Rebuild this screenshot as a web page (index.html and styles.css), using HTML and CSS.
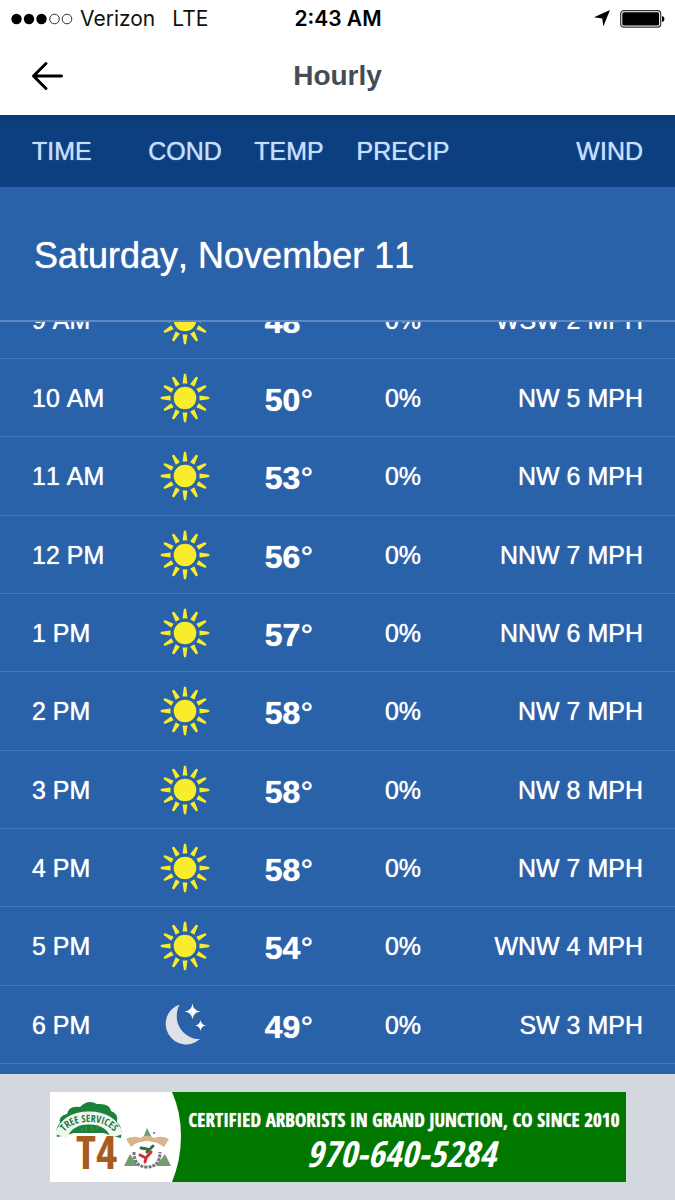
FILE: index.html
```html
<!DOCTYPE html>
<html lang="en">
<head>
<meta charset="utf-8">
<meta name="viewport" content="width=device-width, initial-scale=1">
<title>Hourly</title>
<link rel="stylesheet" href="styles.css">
</head>
<body>
<svg width="0" height="0" class="defs" aria-hidden="true">
  <defs>
    <path id="ray" d="M-2.400 -14.500 L-1.200 -23.500 Q0 -25.500 1.200 -23.500 L2.400 -14.500 Z"/>
    <symbol id="sun" viewBox="-25 -25 50 50">
      <g fill="#f9ec2b">
        <circle r="11.300"/>
        <use href="#ray"/>
        <use href="#ray" transform="rotate(30)"/>
        <use href="#ray" transform="rotate(60)"/>
        <use href="#ray" transform="rotate(90)"/>
        <use href="#ray" transform="rotate(120)"/>
        <use href="#ray" transform="rotate(150)"/>
        <use href="#ray" transform="rotate(180)"/>
        <use href="#ray" transform="rotate(210)"/>
        <use href="#ray" transform="rotate(240)"/>
        <use href="#ray" transform="rotate(270)"/>
        <use href="#ray" transform="rotate(300)"/>
        <use href="#ray" transform="rotate(330)"/>
      </g>
    </symbol>
    <symbol id="moon" viewBox="0 0 50 50">
      <path fill="#dfe1e6" d="M19.500 4.500 A20.500 20.500 0 1 0 40 39 C27 40 10 25 19.500 4.500 Z"/>
      <path fill="#fff" d="M32.500 3.500 Q33.300 10.700 40.500 11.500 Q33.300 12.300 32.500 19.500 Q31.700 12.300 24.500 11.500 Q31.700 10.700 32.500 3.500 Z"/>
      <path fill="#fff" d="M40.500 20 Q41.200 24.800 46 25.500 Q41.200 26.200 40.500 31 Q39.800 26.200 35 25.500 Q39.800 24.800 40.500 20 Z"/>
    </symbol>
  </defs>
</svg>

<div class="app">
  <div class="status">
    <div class="carrier">
      <svg class="signal" width="62" height="12" viewBox="0 0 62 12" role="img" aria-label="Signal 3 of 5">
        <circle cx="5.500" cy="6" r="5.200"/><circle cx="18" cy="6" r="5.200"/><circle cx="30.500" cy="6" r="5.200"/>
        <g fill="none" stroke="#333"><circle cx="43.500" cy="6" r="4.800"/><circle cx="56" cy="6" r="4.800"/></g>
      </svg>
      <span>Verizon</span>
      <span class="network">LTE</span>
    </div>
    <div class="clock">2:43 AM</div>
    <div class="indicators">
      <svg width="16" height="17" viewBox="0 0 16 17" aria-label="Location"><path d="M16 0 L9.300 16.500 L8.300 8.500 L0 7.300 Z"/></svg>
      <svg width="45" height="18" viewBox="0 0 45 18" aria-label="Battery full">
        <rect x=".7" y=".7" width="40" height="16.500" rx="3" fill="#fff" stroke="#333" stroke-width="1.200"/>
        <rect x="2.300" y="2.300" width="36.800" height="13.300" rx="1.500"/>
        <path d="M42 6 Q44.500 6.500 44.500 9 Q44.500 11.500 42 12 Z"/>
      </svg>
    </div>
  </div>

  <header class="nav">
    <button class="back" type="button" aria-label="Back">
      <svg width="34" height="30" viewBox="0 0 34 30" fill="none" stroke="#000" stroke-width="3" stroke-linecap="round" stroke-linejoin="round"><path d="M16 2.500 L3.500 15 L16 27.500 M3.500 15 H31.500"/></svg>
    </button>
    <h1>Hourly</h1>
  </header>

  <table class="hourly">
    <thead>
      <tr><th scope="col">TIME</th><th scope="col">COND</th><th scope="col">TEMP</th><th scope="col">PRECIP</th><th scope="col">WIND</th></tr>
    </thead>
    <tbody class="day">
      <tr><th scope="rowgroup" colspan="5">Saturday, November 11</th></tr>
    </tbody>
    <tbody class="rows">
      <tr><td>9 AM</td><td><svg role="img" aria-label="Sunny"><use href="#sun"/></svg></td><td>48<span>°</span></td><td>0%</td><td>WSW 2 MPH</td></tr>
      <tr><td>10 AM</td><td><svg role="img" aria-label="Sunny"><use href="#sun"/></svg></td><td>50<span>°</span></td><td>0%</td><td>NW 5 MPH</td></tr>
      <tr><td>11 AM</td><td><svg role="img" aria-label="Sunny"><use href="#sun"/></svg></td><td>53<span>°</span></td><td>0%</td><td>NW 6 MPH</td></tr>
      <tr><td>12 PM</td><td><svg role="img" aria-label="Sunny"><use href="#sun"/></svg></td><td>56<span>°</span></td><td>0%</td><td>NNW 7 MPH</td></tr>
      <tr><td>1 PM</td><td><svg role="img" aria-label="Sunny"><use href="#sun"/></svg></td><td>57<span>°</span></td><td>0%</td><td>NNW 6 MPH</td></tr>
      <tr><td>2 PM</td><td><svg role="img" aria-label="Sunny"><use href="#sun"/></svg></td><td>58<span>°</span></td><td>0%</td><td>NW 7 MPH</td></tr>
      <tr><td>3 PM</td><td><svg role="img" aria-label="Sunny"><use href="#sun"/></svg></td><td>58<span>°</span></td><td>0%</td><td>NW 8 MPH</td></tr>
      <tr><td>4 PM</td><td><svg role="img" aria-label="Sunny"><use href="#sun"/></svg></td><td>58<span>°</span></td><td>0%</td><td>NW 7 MPH</td></tr>
      <tr><td>5 PM</td><td><svg role="img" aria-label="Sunny"><use href="#sun"/></svg></td><td>54<span>°</span></td><td>0%</td><td>WNW 4 MPH</td></tr>
      <tr><td>6 PM</td><td><svg role="img" aria-label="Clear night"><use href="#moon"/></svg></td><td>49<span>°</span></td><td>0%</td><td>SW 3 MPH</td></tr>
    </tbody>
  </table>

  <footer class="ad-bar">
    <a class="ad" href="#ad">
      <svg class="ad-logos" width="133" height="90" viewBox="0 0 133 90" role="img" aria-label="T4 Tree Services">
        <path fill="#fff" d="M0 0 H122 Q131 20 131 44 Q131 68 122 90 H0 Z"/>
        <path fill="#1d8238" d="M7 45 Q5 35 10 31 Q8 24 17 22 Q19 13 30 15 Q38 7 47 12 Q60 11 61 19 Q69 22 67 30 Q73 35 71 46 L62 44 L54 41 H24 L17 43 Z"/>
        <path fill="none" stroke="#eef8f0" stroke-width="13" d="M11 44 Q17 26 39 26 Q61 26 67 44"/>
        <path id="arch" fill="none" d="M10 48 Q16 30 39 30 Q62 30 68 48"/>
        <text class="arch-text"><textPath href="#arch" startOffset="50%" text-anchor="middle">TREE SERVICES</textPath></text>
        <path fill="none" stroke="#2f8a49" stroke-width="2" d="M29 34 L33 39 M36 34 V39 M42 34 V39 M49 34 L45 39"/>
        <text class="tee-four" x="26" y="77">T4</text>
        <path fill="#739a70" d="M97 36 L93 46 H102 Z M80 62 L74 74 H88 Z M115 62 L106 74 H121 Z"/>
        <path fill="#d9b58d" d="M76 47 Q84 43 90 46 Q97 41 104 46 Q112 43 119 47 L114 55 Q106 49 97 50 Q87 49 81 55 Z"/>
        <circle cx="97" cy="62" r="13" fill="#fff"/>
        <path fill="none" stroke="#77757e" stroke-width="3" stroke-dasharray="3 1" d="M84 60 Q84 75 97 75 Q110 75 110 60"/>
        <path fill="none" stroke="#cc3033" stroke-width="3" stroke-linecap="round" d="M90 63 L96 66 L101 60 M96 66 L95 70"/>
        <path fill="none" stroke="#386c42" stroke-width="3" stroke-linecap="round" d="M91 56 L97 57 M101 56 L103 54 M97 60 L100 57"/>
        <circle cx="104" cy="41" r="1" fill="#406fa5"/>
      </svg>
      <span class="ad-copy">
        <span class="ad-line">CERTIFIED ARBORISTS IN GRAND JUNCTION, CO SINCE 2010</span>
        <span class="ad-phone">970-640-5284</span>
      </span>
    </a>
  </footer>
</div>
</body>
</html>
```
FILE: styles.css
```css
* { box-sizing: border-box; }

body {
  margin: 0;
  background: #fff;
  font-family: "Liberation Sans", Arial, sans-serif;
}

.defs { position: absolute; }

.app {
  display: flex;
  flex-direction: column;
  height: 100vh;
}

/* Status bar */
.status {
  display: grid;
  grid-template-columns: 1fr auto 1fr;
  align-items: center;
  height: 37px;
  padding: 0 10px 0 11px;
  font: 21px "Inter", sans-serif;
  color: #111;
}

.carrier { display: flex; align-items: center; gap: 7px; }
.network { margin-left: 10px; }
.clock { font-weight: 600; color: #000; }
.indicators {
  display: flex;
  justify-content: flex-end;
  align-items: center;
  gap: 10px;
}

/* Title bar */
.nav {
  display: grid;
  grid-template-columns: 1fr auto 1fr;
  align-items: center;
  height: 78px;
  padding: 0 30px;
}

.back {
  justify-self: start;
  display: flex;
  padding: 0;
  border: 0;
  background: none;
}

.nav h1 {
  margin: 0;
  font-size: 28px;
  line-height: 32px;
  color: #454c53;
}

/* Hourly table */
.hourly {
  display: flex;
  flex: 1;
  flex-direction: column;
  min-height: 0;
  background: #2962a9;
  color: #fff;
  font-size: 25px;
  line-height: 32px;
  font-kerning: none;
  text-shadow: 0 0 1px currentColor;
}

.hourly thead,
.day { display: block; }

.hourly thead {
  background: linear-gradient(#0d3a75, #0c3f7f 16px);
  color: #c3deff;
}

.hourly thead tr,
.rows tr {
  display: grid;
  grid-template-columns: 107px 92px 116px 112px 1fr;
  align-items: center;
  padding: 0 32px;
}

.hourly thead tr { height: 72px; }

.hourly th,
.hourly td {
  padding: 0;
  font-weight: 400;
  text-align: center;
}

.hourly tr > :first-child { text-align: left; }
.hourly tr > :nth-child(5) { text-align: right; }

.day { border-bottom: 2px solid #5c89c3; }
.day tr { display: block; padding: 49px 34px 44px; }
.day th { display: block; font-size: 36px; line-height: 40px; }

.rows {
  display: flex;
  flex: 1;
  flex-direction: column;
  justify-content: flex-end;
  min-height: 0;
  overflow: hidden;
  padding-bottom: 10px;
}

.rows tr {
  flex: none;
  height: 78px;
  border-bottom: 1px solid #4079bf;
}

.rows tr:nth-child(3n) { height: 79px; }

.rows svg {
  display: block;
  width: 50px;
  height: 50px;
  margin: 0 auto;
}

.rows td:nth-child(3) { padding-top: 4px; font-size: 32px; font-weight: 700; }
.rows td span { font-weight: 400; }

/* Advertisement */
.ad-bar {
  display: flex;
  justify-content: center;
  padding: 18px 0;
  background: #d3d7de;
}

.ad {
  display: flex;
  width: 576px;
  max-width: 100%;
  height: 90px;
  background: #007800;
  color: #fff;
  text-decoration: none;
  white-space: nowrap;
  font-family: "Open Sans Condensed", "Liberation Sans Narrow", "Liberation Sans", sans-serif;
}

.ad-logos { flex: none; }

.ad-copy {
  display: flex;
  flex: 1;
  flex-direction: column;
  align-items: center;
  padding-top: 16px;
}

.ad-line { font-size: 19px; font-weight: 700; line-height: 24px; text-shadow: 0 0 1px #fff; }
.ad-phone { margin-right: 6px; font-size: 36px; font-style: italic; line-height: 44px; }

.arch-text { font: 700 10px "Open Sans Condensed", "Liberation Sans", sans-serif; fill: #28794a; }
.tee-four { font: 700 46px "Open Sans Condensed", "Liberation Sans", sans-serif; fill: #a75b1c; }
```
